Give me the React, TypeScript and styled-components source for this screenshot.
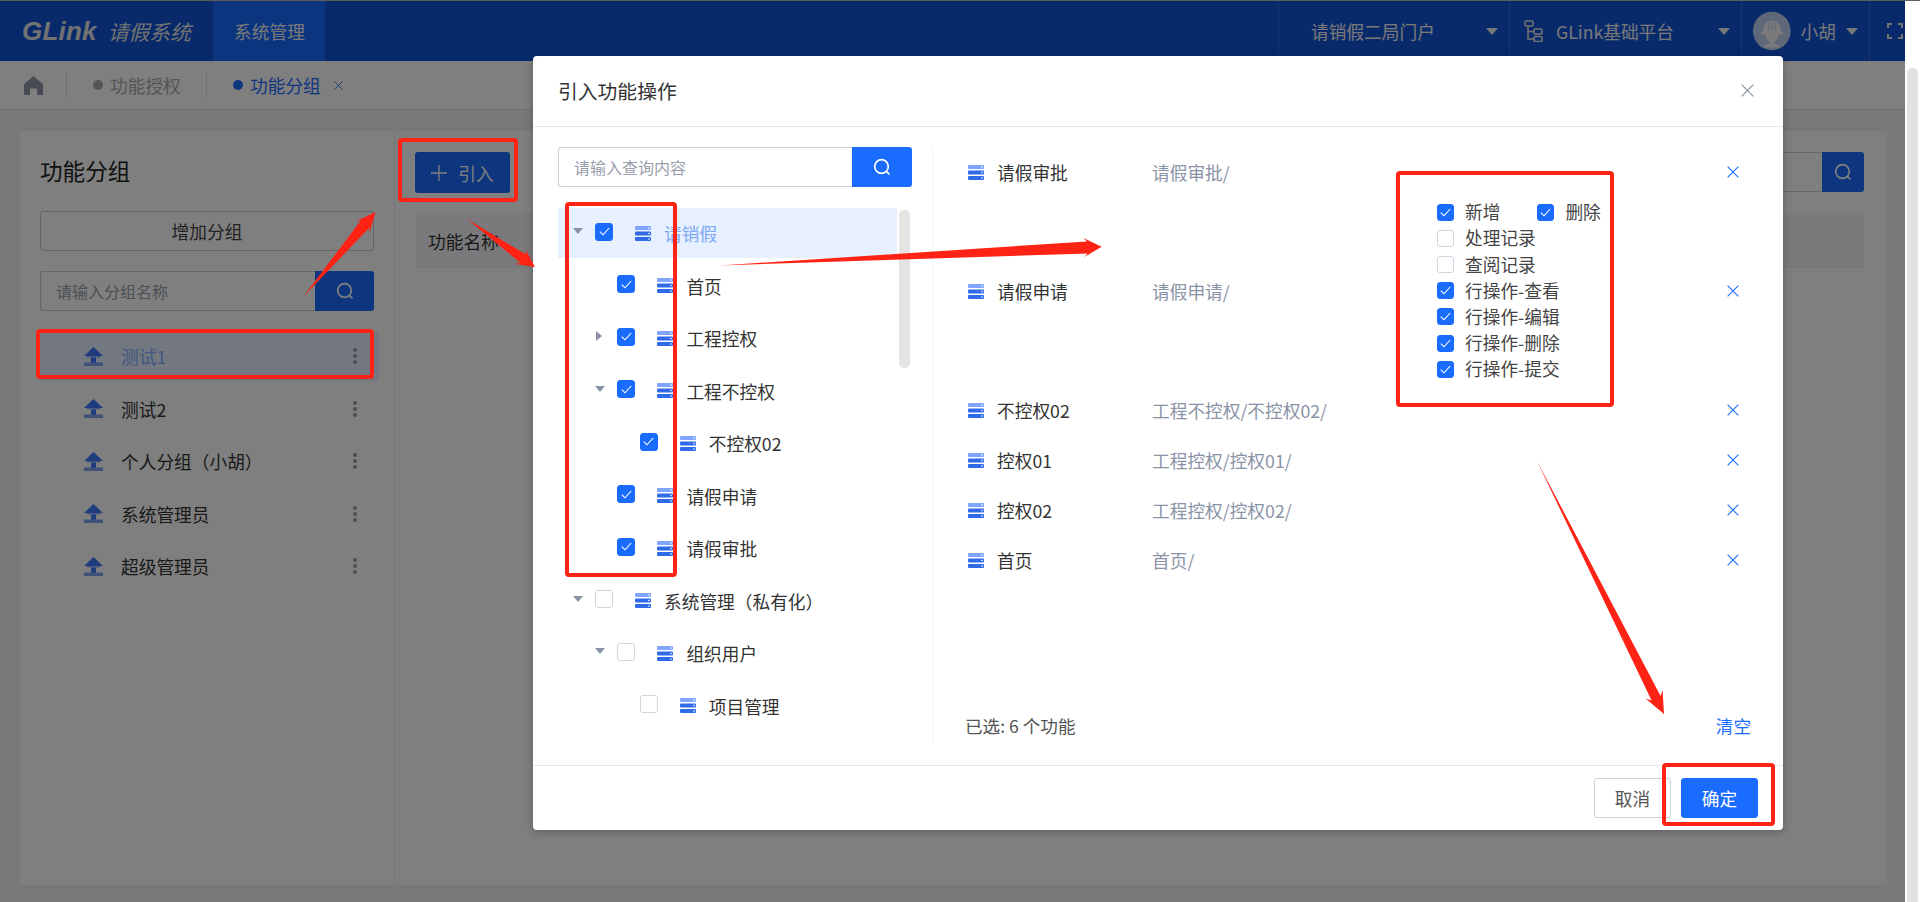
import React from "react";
import styled, { createGlobalStyle } from "styled-components";

const FONT = `"Noto Sans CJK SC", "Liberation Sans", sans-serif`;
const BLUE = "#1a6cff";

const Global = createGlobalStyle`
  html, body { margin: 0; padding: 0; background: #fff; overflow: hidden; }
  * { box-sizing: border-box; }
  body { font-family: ${FONT}; font-size: 17.7px; color: #333; }
`;

const Root = styled.div`
  position: relative; width: 1920px; height: 902px; display: flex; overflow: hidden;
  border-top: 1px solid #5d5d5d; background: #fff;
`;
const Viewport = styled.div`
  position: relative; width: 1905px; height: 901px; display: flex; flex-direction: column; background: #eef0f4;
`;
const PageScrollbar = styled.div`flex: 1; padding: 67px 2px 0 2px; background: #fff;`;
const PageThumb = styled.div`height: 100%; background: #e2e2e2; border-radius: 5px 5px 0 0;`;
const Mask = styled.div`position: absolute; inset: 0; background: rgba(0,0,0,.5);`;

/* header */
const Header = styled.header`height: 60px; flex: none; display: flex; align-items: stretch; background: #1054d6; color: #f2f2f2;`;
const Logo = styled.div`
  width: 214px; display: flex; align-items: center; gap: 11px; padding-left: 22px;
  border-right: 1px solid rgba(255,255,255,.1); font-style: italic; color: #e4e4e4;
`;
const LogoMark = styled.span`font-family: "Liberation Sans", sans-serif; font-weight: 700; font-size: 26px; letter-spacing: .2px;`;
const LogoName = styled.span`font-size: 20.8px; font-weight: 400;`;
const NavActive = styled.div`width: 111px; display: flex; align-items: center; justify-content: center; background: #186aff;`;
const HeaderSpacer = styled.div`flex: 1;`;
const HeaderCell = styled.div<{ $w: number; $pl: number; $gap?: number }>`
  width: ${p => p.$w}px; padding-left: ${p => p.$pl}px; gap: ${p => p.$gap ?? 0}px;
  display: flex; align-items: center; border-left: 1px solid rgba(255,255,255,.12);
`;
const HeaderText = styled.span`flex: 1; white-space: nowrap;`;
const Caret = styled.i`
  display: block; width: 0; height: 0; flex: none;
  border-left: 6px solid transparent; border-right: 6px solid transparent; border-top: 7px solid #f2f2f2;
`;
const CaretSlot = styled.span`margin-right: 11px; display: flex;`;

/* tab bar */
const TabBar = styled.nav`height: 49px; flex: none; display: flex; align-items: center; background: #fff; border-bottom: 1px solid #e3e4e8;`;
const HomeCell = styled.div`width: 66px; padding-left: 24px; display: flex;`;
const Tab = styled.div<{ $active?: boolean; $w: number }>`
  width: ${p => p.$w}px; height: 26px; padding-left: 26px; display: flex; align-items: center; gap: 7px;
  border-left: 1px solid #dfe1e6; color: ${p => (p.$active ? BLUE : "#aaa")};
`;
const TabDot = styled.i`width: 10px; height: 10px; border-radius: 50%; background: currentColor; flex: none;`;
const TabClose = styled.span`display: flex; margin-left: 6px;`;

/* page */
const Main = styled.main`flex: 1; padding: 21px 18px 17px 20px; display: flex; min-height: 0;`;
const Panel = styled.section`flex: 1; display: flex; background: #fff;`;
const Aside = styled.aside`width: 375px; padding: 29px 20px 0 20px; border-right: 1px solid #eceef2;`;
const AsideTitle = styled.h2`margin: 0 0 29px; font-size: 22.6px; line-height: 22px; font-weight: 400; color: #222;`;
const OutlineButton = styled.button`
  display: block; width: 100%; height: 40px; background: #fff; border: 1px solid #c9cdd6; border-radius: 3px;
  font: inherit; color: #444;
`;
const SearchGroup = styled.div<{ $mt?: number; $w?: number }>`
  display: flex; height: 40px; margin-top: ${p => p.$mt ?? 0}px; ${p => (p.$w ? `width: ${p.$w}px;` : "")}
`;
const SearchInput = styled.div`
  flex: 1; min-width: 0; display: flex; align-items: center; padding-left: 15px; background: #fff;
  border: 1px solid #c9cfdc; border-right: 0; border-radius: 3px 0 0 3px; font-size: 16px; color: #9aa0ad; white-space: nowrap;
`;
const SearchButton = styled.button<{ $w: number }>`
  width: ${p => p.$w}px; height: 100%; flex: none; padding: 0; display: flex; align-items: center; justify-content: center;
  border: 0; border-radius: 0 3px 3px 0; background: ${BLUE};
`;
const GroupList = styled.ul`list-style: none; margin: 20px 0 0 -3px; padding: 0; width: 342px;`;
const GroupItem = styled.li<{ $selected?: boolean }>`
  height: 50px; margin-bottom: 2.5px; padding: 0 18px 0 47px; display: flex; align-items: center; gap: 18px;
  background: ${p => (p.$selected ? "#e6efff" : "transparent")}; color: ${p => (p.$selected ? "#7db0ff" : "#333")};
`;
const GroupLabel = styled.span`flex: 1;`;
const Dots = styled.span`display: flex; flex-direction: column; gap: 2px; margin-right: 4px;`;
const Dot = styled.i`width: 4px; height: 4px; border-radius: 50%; background: #989ba5;`;

const Content = styled.div`flex: 1; padding: 21px 23px 0 20px; min-width: 0;`;
const Toolbar = styled.div`display: flex; justify-content: space-between; align-items: flex-start;`;
const PrimaryButton = styled.button<{ $w: number; $h: number }>`
  width: ${p => p.$w}px; height: ${p => p.$h}px; display: flex; align-items: center; justify-content: center; gap: 11px;
  border: 0; border-radius: 3px; background: ${BLUE}; color: #fff; font: inherit; padding: 0;
`;
const TableHead = styled.div`
  margin: 20px 0 0 1px; height: 55px; padding-left: 11px; display: flex; align-items: center;
  background: #f4f5f8; border: 1px solid #eceef2; color: #333;
`;

/* modal */
const Modal = styled.div`
  position: absolute; left: 533px; top: 55px; width: 1250px; height: 774px; display: flex; flex-direction: column;
  background: #fff; border-radius: 4px; box-shadow: 0 2px 8px rgba(0,0,0,.25);
`;
const ModalHead = styled.div`
  height: 71px; flex: none; padding: 0 29px 2px 25px; display: flex; align-items: center; justify-content: space-between;
  border-bottom: 1px solid #e6e9ef;
`;
const ModalTitle = styled.h3`margin: 0; font-size: 19.8px; font-weight: 400; color: #333;`;
const ModalBody = styled.div`flex: 1; min-height: 0; display: flex; padding-top: 20px;`;
const TreePane = styled.div`
  position: relative; width: 400px; height: 598px; flex: none; padding: 0 20px 0 25px; border-right: 1px solid #f1f3f6; overflow: hidden;
`;
const TreeList = styled.div`margin-top: 21px; width: 339px;`;
const TreeRow = styled.div<{ $level: number; $selected?: boolean }>`
  height: 50px; margin-bottom: 2.5px; display: flex; align-items: center; padding-left: ${p => 15 + p.$level * 22.4}px;
  background: ${p => (p.$selected ? "#e6f0ff" : "transparent")}; color: ${p => (p.$selected ? "#7fa9f2" : "#333")};
`;
const ArrowSlot = styled.span`width: 22px; flex: none; display: flex; margin-top: -4px;`;
const TreeDown = styled.i`
  display: block; width: 0; height: 0; border-left: 5px solid transparent; border-right: 5px solid transparent; border-top: 6px solid #8a93a6;
`;
const TreeRight = styled.i`
  display: block; width: 0; height: 0; margin-left: 1px; border-top: 5px solid transparent; border-bottom: 5px solid transparent; border-left: 6px solid #8a93a6;
`;
const Box = styled.span<{ $on: boolean }>`
  width: 18px; height: 18px; flex: none; display: flex; align-items: center; justify-content: center; margin-top: -3px;
  border-radius: 3px; background: ${p => (p.$on ? BLUE : "#fff")}; border: 1px solid ${p => (p.$on ? BLUE : "#cfd4e0")};
`;
const TreeIcon = styled.span`display: flex; margin: 0 13px 0 22px; flex: none;`;
const TreeThumb = styled.div`position: absolute; left: 366px; top: 63px; width: 11px; height: 158px; border-radius: 5px; background: #e4e4e4;`;

const SelectedPane = styled.div`flex: 1; height: 598px; padding: 0 32px 0 35px; display: flex; flex-direction: column;`;
const SelectedGrid = styled.div`
  display: grid; grid-template-columns: 184px 285px 290px 24px; grid-template-rows: 119px 119px 50px 50px 50px 50px; flex: none;
`;
const NameCell = styled.div<{ $row: number }>`grid-area: ${p => p.$row} / 1; height: 50px; display: flex; align-items: center; gap: 13px; color: #333;`;
const PathCell = styled.div<{ $row: number }>`grid-area: ${p => p.$row} / 2; height: 50px; display: flex; align-items: center; color: #8a93a6;`;
const RemoveCell = styled.div<{ $row: number }>`grid-area: ${p => p.$row} / 4; height: 50px; display: flex; align-items: center;`;
const Options = styled.div`grid-column: 3; grid-row: 1 / span 2; padding-top: 52px; display: flex; flex-direction: column;`;
const OptionRow = styled.div`height: 26.2px; display: flex; align-items: center; gap: 37px;`;
const Option = styled.label`display: flex; align-items: center; gap: 11px; color: #444; line-height: 1;`;
const OptionBox = styled(Box)`width: 17px; height: 17px; margin-top: 0;`;
const Summary = styled.div`margin: auto 0 0 -3px; height: 40px; display: flex; align-items: center; justify-content: space-between; color: #555; font-size: 17.6px;`;
const ClearLink = styled.a`color: ${BLUE};`;
const ModalFoot = styled.div`
  height: 65px; flex: none; padding: 12px 25px 0 0; display: flex; justify-content: flex-end; gap: 10px; border-top: 1px solid #e6e8ec;
`;
const CancelButton = styled.button`width: 77px; height: 40px; background: #fff; border: 1px solid #cbd0dc; border-radius: 3px; font: inherit; color: #555; padding: 0;`;
const ConfirmButton = styled(CancelButton)`background: ${BLUE}; border-color: ${BLUE}; color: #fff;`;

/* annotations */
const RedBox = styled.div<{ $x: number; $y: number; $w: number; $h: number }>`
  position: absolute; left: ${p => p.$x}px; top: ${p => p.$y - 1}px; width: ${p => p.$w}px; height: ${p => p.$h}px;
  border: 4px solid #fe2315; border-radius: 4px; pointer-events: none;
`;
const ArrowLayer = styled.svg`position: absolute; left: 0; top: -1px; pointer-events: none;`;

/* icons */
const SearchIcon = () => (
  <svg width="18" height="18" viewBox="0 0 18 18" fill="none" stroke="#fff" strokeWidth="1.7">
    <circle cx="8.5" cy="8.5" r="6.8" /><path d="M13.4 13.4 16 16" strokeLinecap="round" />
  </svg>
);
const Cross = ({ c, s = 12, w = 1.1 }: { c: string; s?: number; w?: number }) => (
  <svg width={s} height={s} viewBox="0 0 12 12" fill="none" stroke={c} strokeWidth={w}><path d="M.6.6l10.8 10.8M11.4.6.6 11.4" /></svg>
);
const Tick = () => (
  <svg width="11" height="9" viewBox="0 0 11 9" fill="none" stroke="#fff" strokeWidth="1.1"><path d="M.8 4.6 4 7.8 10.2 1" /></svg>
);
const ServerIcon = () => (
  <svg width="16" height="15" viewBox="0 0 16 15">
    <rect x="0" y="0" width="16" height="4" rx="1" fill="#7fa5ff" />
    <rect x="0" y="5.5" width="16" height="4" rx="1" fill="#2f6be8" />
    <rect x="0" y="11" width="16" height="4" rx="1" fill="#2f6be8" />
    <circle cx="14" cy="2" r=".8" fill="#fff" /><circle cx="14" cy="7.5" r=".8" fill="#fff" /><circle cx="14" cy="13" r=".8" fill="#fff" />
  </svg>
);
const GroupIcon = () => (
  <svg width="19" height="19" viewBox="0 0 19 19">
    <path d="M9.5 0 19 9H0z" fill="#3f78ff" />
    <rect x="3" y="9" width="13" height="1.5" fill="#8fb0f5" />
    <rect x="7" y="10.500" width="5" height="5.500" fill="#3f78ff" />
    <rect x="0" y="15.500" width="19" height="3.500" fill="#7fa3f0" />
  </svg>
);
const HomeIcon = () => (
  <svg width="19" height="19" viewBox="0 0 19 19" fill="#8f96a6">
    <path d="M9.5 0 19 8.2V19h-6v-6.5H6V19H0V8.2z" />
  </svg>
);
const PlusIcon = () => (
  <svg width="16" height="16" viewBox="0 0 16 16" stroke="#fff" strokeWidth="1.3"><path d="M8 0v16M0 8h16" /></svg>
);
const PlatformIcon = () => (
  <svg width="19" height="22" viewBox="0 0 19 22" fill="none" stroke="#e8e8e8" strokeWidth="1.5">
    <rect x="1" y="1" width="8" height="5" rx="1.2" /><rect x="10" y="9" width="8" height="5" rx="1.2" /><rect x="10" y="16.5" width="8" height="5" rx="1.2" />
    <path d="M4 6v13h6M4 11.5h6" />
  </svg>
);
const FullscreenIcon = () => (
  <svg width="16" height="16" viewBox="0 0 16 16" fill="none" stroke="#e6e6e6" strokeWidth="2"><path d="M1 5V1h4M11 1h4v4M15 11v4h-4M5 15H1v-4" /></svg>
);
const Avatar = () => (
  <svg width="39" height="40" viewBox="0 0 39 40">
    <ellipse cx="19.5" cy="20" rx="19.5" ry="20" fill="#bcd0f0" />
    <path d="M8 22c0-1 1-2 2-2 0-6 4-11 9.500-11S29 14 29 20c1 0 2 1 2 2s-1 2-2 2H10c-1 0-2-1-2-2z" fill="#f4f4f4" />
    <path d="M13 24h13c0 4-2 6-4 7v2c3 1 5 2 6 4H11c1-2 3-3 6-4v-2c-2-1-4-3-4-7z" fill="#f4f4f4" />
    <path d="M16 11v8M19.500 10v9M23 11v8" stroke="#bcd0f0" strokeWidth="1" />
  </svg>
);

const arrowPoints = (x1: number, y1: number, x2: number, y2: number, shaft: number, head: number, len: number) => {
  const d = Math.hypot(x2 - x1, y2 - y1);
  const ux = (x2 - x1) / d, uy = (y2 - y1) / d, nx = -uy, ny = ux;
  const neck = [x2 - ux * len * 0.8, y2 - uy * len * 0.8], back = [x2 - ux * len, y2 - uy * len];
  const pts = [
    [x1, y1],
    [neck[0] + nx * shaft / 2, neck[1] + ny * shaft / 2],
    [back[0] + nx * head / 2, back[1] + ny * head / 2],
    [x2, y2],
    [back[0] - nx * head / 2, back[1] - ny * head / 2],
    [neck[0] - nx * shaft / 2, neck[1] - ny * shaft / 2],
  ];
  return pts.map(p => p.map(v => v.toFixed(1)).join(",")).join(" ");
};

const ARROWS = [
  arrowPoints(303, 297, 375.500, 212, 11, 18, 20),
  arrowPoints(467, 219, 535, 267, 10, 18, 18),
  arrowPoints(720, 265.500, 1101.700, 246.700, 12, 19, 18),
  arrowPoints(1537, 461, 1664, 714, 10, 19, 22),
];

const GROUPS = ["测试1", "测试2", "个人分组（小胡）", "系统管理员", "超级管理员"];

type Node = { label: string; level: number; on: boolean; arrow?: "down" | "right"; selected?: boolean };
const TREE: Node[] = [
  { label: "请销假", level: 0, on: true, arrow: "down", selected: true },
  { label: "首页", level: 1, on: true },
  { label: "工程控权", level: 1, on: true, arrow: "right" },
  { label: "工程不控权", level: 1, on: true, arrow: "down" },
  { label: "不控权02", level: 2, on: true },
  { label: "请假申请", level: 1, on: true },
  { label: "请假审批", level: 1, on: true },
  { label: "系统管理（私有化）", level: 0, on: false, arrow: "down" },
  { label: "组织用户", level: 1, on: false, arrow: "down" },
  { label: "项目管理", level: 2, on: false },
];

const SELECTED = [
  ["请假审批", "请假审批/"],
  ["请假申请", "请假申请/"],
  ["不控权02", "工程不控权/不控权02/"],
  ["控权01", "工程控权/控权01/"],
  ["控权02", "工程控权/控权02/"],
  ["首页", "首页/"],
];

const OPTION_ROWS: [string, boolean][][] = [
  [["新增", true], ["删除", true]],
  [["处理记录", false]],
  [["查阅记录", false]],
  [["行操作-查看", true]],
  [["行操作-编辑", true]],
  [["行操作-删除", true]],
  [["行操作-提交", true]],
];

export default function App() {
  return (
    <Root>
      <Global />
      <Viewport>
        <Header>
          <Logo><LogoMark>GLink</LogoMark><LogoName>请假系统</LogoName></Logo>
          <NavActive>系统管理</NavActive>
          <HeaderSpacer />
          <HeaderCell $w={231} $pl={32}><HeaderText>请销假二局门户</HeaderText><CaretSlot><Caret /></CaretSlot></HeaderCell>
          <HeaderCell $w={232} $pl={14} $gap={13}><PlatformIcon /><HeaderText>GLink基础平台</HeaderText><CaretSlot><Caret /></CaretSlot></HeaderCell>
          <HeaderCell $w={128} $pl={11} $gap={10}><Avatar /><HeaderText>小胡</HeaderText><CaretSlot><Caret /></CaretSlot></HeaderCell>
          <HeaderCell $w={36} $pl={17}><FullscreenIcon /></HeaderCell>
        </Header>
        <TabBar>
          <HomeCell><HomeIcon /></HomeCell>
          <Tab $w={140}><TabDot />功能授权</Tab>
          <Tab $w={150} $active><TabDot />功能分组<TabClose><Cross c={BLUE} s={9} /></TabClose></Tab>
        </TabBar>
        <Main>
          <Panel>
            <Aside>
              <AsideTitle>功能分组</AsideTitle>
              <OutlineButton>增加分组</OutlineButton>
              <SearchGroup $mt={20}>
                <SearchInput>请输入分组名称</SearchInput>
                <SearchButton $w={59}><SearchIcon /></SearchButton>
              </SearchGroup>
              <GroupList>
                {GROUPS.map((g, i) => (
                  <GroupItem key={g} $selected={i === 0}>
                    <GroupIcon />
                    <GroupLabel>{g}</GroupLabel>
                    <Dots><Dot /><Dot /><Dot /></Dots>
                  </GroupItem>
                ))}
              </GroupList>
            </Aside>
            <Content>
              <Toolbar>
                <PrimaryButton $w={95} $h={41}>
                  <PlusIcon />
                  引入
                </PrimaryButton>
                <SearchGroup $w={300}>
                  <SearchInput />
                  <SearchButton $w={42}><SearchIcon /></SearchButton>
                </SearchGroup>
              </Toolbar>
              <TableHead>功能名称</TableHead>
            </Content>
          </Panel>
        </Main>
        <Mask />
        <Modal>
          <ModalHead>
            <ModalTitle>引入功能操作</ModalTitle>
            <Cross c="#8a93a6" s={13} />
          </ModalHead>
          <ModalBody>
            <TreePane>
              <SearchGroup>
                <SearchInput>请输入查询内容</SearchInput>
                <SearchButton $w={60}><SearchIcon /></SearchButton>
              </SearchGroup>
              <TreeList>
                {TREE.map(n => (
                  <TreeRow key={n.label} $level={n.level} $selected={n.selected}>
                    <ArrowSlot>{n.arrow === "down" ? <TreeDown /> : n.arrow === "right" ? <TreeRight /> : null}</ArrowSlot>
                    <Box $on={n.on}>{n.on && <Tick />}</Box>
                    <TreeIcon><ServerIcon /></TreeIcon>
                    {n.label}
                  </TreeRow>
                ))}
              </TreeList>
              <TreeThumb />
            </TreePane>
            <SelectedPane>
              <SelectedGrid>
                {SELECTED.map(([name, path], i) => (
                  <React.Fragment key={name}>
                    <NameCell $row={i + 1}><ServerIcon />{name}</NameCell>
                    <PathCell $row={i + 1}>{path}</PathCell>
                    <RemoveCell $row={i + 1}><Cross c={BLUE} s={12} /></RemoveCell>
                  </React.Fragment>
                ))}
                <Options>
                  {OPTION_ROWS.map(row => (
                    <OptionRow key={row[0][0]}>
                      {row.map(([label, on]) => (
                        <Option key={label}>
                          <OptionBox $on={on}>{on && <Tick />}</OptionBox>
                          {label}
                        </Option>
                      ))}
                    </OptionRow>
                  ))}
                </Options>
              </SelectedGrid>
              <Summary>
                <span>已选: 6 个功能</span>
                <ClearLink>清空</ClearLink>
              </Summary>
            </SelectedPane>
          </ModalBody>
          <ModalFoot>
            <CancelButton>取消</CancelButton>
            <ConfirmButton>确定</ConfirmButton>
          </ModalFoot>
        </Modal>
      </Viewport>
      <PageScrollbar><PageThumb /></PageScrollbar>
      <RedBox $x={398} $y={138} $w={120} $h={64} />
      <RedBox $x={565} $y={202} $w={112} $h={375} />
      <RedBox $x={36} $y={329} $w={338} $h={50} />
      <RedBox $x={1396} $y={171} $w={218} $h={236} />
      <RedBox $x={1662} $y={763} $w={113} $h={63} />
      <ArrowLayer width="1920" height="902" viewBox="0 0 1920 902">
        {ARROWS.map(p => <polygon key={p} points={p} fill="#fe2315" />)}
      </ArrowLayer>
    </Root>
  );
}
